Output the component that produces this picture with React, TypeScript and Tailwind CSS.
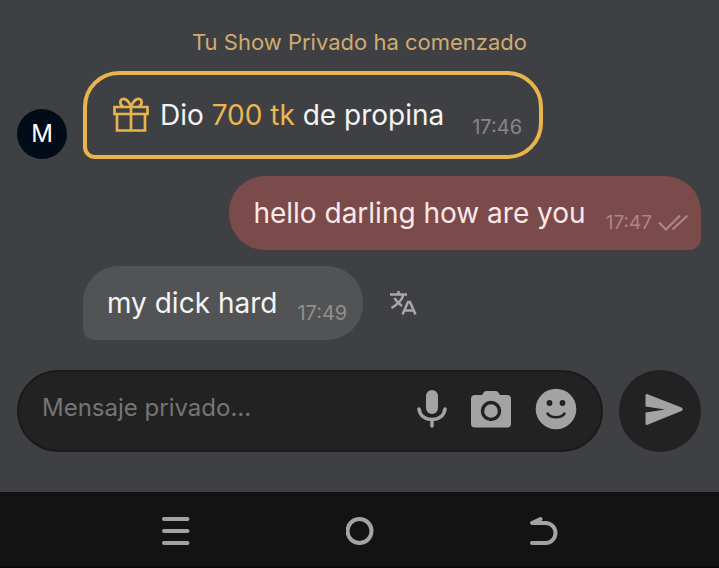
import type { ReactNode } from 'react'

type BubbleProps = {
  className: string
  time: string
  timeClassName: string
  children: ReactNode
  status?: ReactNode
}

function Bubble({ className, time, timeClassName, children, status }: BubbleProps) {
  return (
    <div className={`flex items-center ${className}`}>
      <p className="flex items-center gap-[11px] text-[28px] leading-9">{children}</p>
      <div className={`flex items-center gap-1.5 leading-6 ${timeClassName}`}>
        <time>{time}</time>
        {status}
      </div>
    </div>
  )
}

function GiftIcon() {
  return (
    <svg width="36" height="36" viewBox="0 0 36 36" fill="none" stroke="#e9b44c" strokeWidth="2.7" aria-hidden="true">
      <path d="M1.500 10h33v7h-33zM4 17v16.500h28V17M18 10v23.500" />
      <path d="M18 9.500C16 5 13 1.600 10 2c-3.500.4-3.500 5.500 0 7.500M18 9.500C20 5 23 1.600 26 2c3.500.4 3.500 5.500 0 7.500" />
    </svg>
  )
}

function ReadIcon() {
  return (
    <svg width="31" height="18" viewBox="0 0 31 18" fill="none" stroke="#ab8688" strokeWidth="2.200" aria-hidden="true">
      <path d="M1 8.500l7 7L22 1.500M14.500 15.500L29.500 1.500" />
    </svg>
  )
}

function TranslateIcon() {
  return (
    <svg width="28" height="26" viewBox="0 0 28 26" fill="none" stroke="#a8a8a9" strokeWidth="2.500" aria-hidden="true">
      <path d="M1 4.500h17M9.500 1v3.500M14.500 4.500C13 10 8.500 14.500 2.500 18M5.500 8c1.500 3 4 5.500 7.500 8" />
      <path d="M13.500 24.500L19 12h2l5.500 12.500M15.500 20.500h9" />
    </svg>
  )
}

function MicIcon() {
  return (
    <svg width="30" height="40" viewBox="0 0 30 40" aria-hidden="true">
      <rect x="9" y="1" width="12" height="24" rx="6" fill="#a3a3a3" />
      <path d="M2 20c1 7 6.500 10.500 13 10.500S27 27 28 20M15 30.500v6.500" fill="none" stroke="#a3a3a3" strokeWidth="3.600" strokeLinecap="round" />
    </svg>
  )
}

function CameraIcon() {
  return (
    <svg width="40" height="38" viewBox="0 0 40 38" aria-hidden="true">
      <path d="M4 5h7l2-3q1-1 2.500-1h9q1.500 0 2.500 1l2 3h7q4 0 4 4v25q0 3.500-4 3.500H4q-4 0-4-3.500V9q0-4 4-4z" fill="#a3a3a3" />
      <circle cx="20" cy="21" r="8.500" fill="none" stroke="#222" strokeWidth="3.400" />
    </svg>
  )
}

function SmileIcon() {
  return (
    <svg width="42" height="42" viewBox="0 0 42 42" aria-hidden="true">
      <circle cx="21" cy="21" r="20.300" fill="#a3a3a3" />
      <circle cx="14.500" cy="15" r="2.900" fill="#222" />
      <circle cx="27.500" cy="15" r="2.900" fill="#222" />
      <path d="M12.500 25.500c3.500 5 13.500 5 17 0" fill="none" stroke="#222" strokeWidth="2.600" strokeLinecap="round" />
    </svg>
  )
}

function SendIcon() {
  return (
    <svg width="40" height="34" viewBox="0 0 40 34" fill="#a3a3a3" aria-hidden="true">
      <path d="M1.500 2.500Q1.500.5 3.500 1.300L37.500 14.500q2.500 1.800 0 3.600L3.500 31.700q-2 .8-2-1.200V19.500L21 16.400 1.500 13.500z" />
    </svg>
  )
}

function Composer() {
  return (
    <form className="flex items-center gap-4 pl-[17px] pr-[18px]" onSubmit={(e) => e.preventDefault()}>
      <div className="flex h-[82px] min-w-0 flex-1 items-center gap-6 rounded-full border-2 border-[#1a1a1b] bg-[#222] pb-1 pl-[23px] pr-6">
        <input
          type="text"
          aria-label="Mensaje privado"
          placeholder="Mensaje privado..."
          className="mb-0.5 min-w-0 flex-1 bg-transparent text-2xl text-[#f1f1f1] outline-none placeholder:text-[#757575]"
        />
        <button type="button" aria-label="Grabar audio">
          <MicIcon />
        </button>
        <button type="button" aria-label="Enviar foto">
          <CameraIcon />
        </button>
        <button type="button" aria-label="Emojis">
          <SmileIcon />
        </button>
      </div>
      <button
        type="submit"
        aria-label="Enviar"
        className="flex size-[82px] shrink-0 items-center justify-center rounded-full bg-[#222] pb-0.5 pl-2"
      >
        <SendIcon />
      </button>
    </form>
  )
}

function SystemNav() {
  return (
    <nav className="flex h-[76px] items-center justify-center gap-[156px] border-b-2 border-[#0b0b0b] bg-[#131313] pt-1">
      <button type="button" aria-label="Recientes">
        <svg width="28" height="30" viewBox="0 0 28 30" fill="none" stroke="#a3a3a3" strokeWidth="4" strokeLinecap="round" aria-hidden="true">
          <path d="M2 3h23.500M2 15h23.500M2 27h23.500" />
        </svg>
      </button>
      <button type="button" aria-label="Inicio">
        <svg width="28" height="30" viewBox="0 0 28 30" fill="none" stroke="#a3a3a3" strokeWidth="4" aria-hidden="true">
          <circle cx="13.500" cy="15" r="12" />
        </svg>
      </button>
      <button type="button" aria-label="Atrás">
        <svg width="28" height="30" viewBox="0 0 28 30" fill="none" stroke="#a3a3a3" strokeWidth="4" strokeLinecap="round" strokeLinejoin="round" aria-hidden="true">
          <path d="M10.500 3L2 7H15.500a10 10 0 0 1 0 20H2" />
        </svg>
      </button>
    </nav>
  )
}

export default function App() {
  return (
    <main className="flex min-h-screen flex-col bg-[#3f4043] font-['Inter','Liberation_Sans',sans-serif]">
      <section className="flex flex-1 flex-col gap-4 pt-[27px] pb-[30px]">
        <p className="-mb-0.5 text-center text-[22px] leading-[30px] text-[#cfab6f]">Tu Show Privado ha comenzado</p>

        <div className="mb-px flex items-end gap-4 pl-[17px]">
          <div className="flex size-[50px] items-center justify-center rounded-full bg-[#020c19] text-2xl text-white">M</div>
          <Bubble
            className="h-[88px] gap-7 rounded-[36px] rounded-bl-xl border-4 border-[#e9b44c] pl-[26px] pr-[17px] text-[#f4f4f5]"
            time="17:46"
            timeClassName="mt-6 text-xl text-[#87878a]"
          >
            <GiftIcon />
            <span>
              Dio <span className="text-[#eab750]">700 tk</span> de propina
            </span>
          </Bubble>
        </div>

        <div className="flex justify-end pr-[18px]">
          <Bubble
            className="h-[74px] gap-5 rounded-[36px] rounded-br-xl bg-[#7b4a4b] pl-6 pr-3 text-[#fbe9e7]"
            time="17:47"
            timeClassName="mt-5 text-[19px] text-[#ab8688]"
            status={<ReadIcon />}
          >
            hello darling how are you
          </Bubble>
        </div>

        <div className="flex items-center gap-[26px] pl-[83px]">
          <Bubble
            className="h-[74px] gap-5 rounded-[36px] rounded-bl-xl bg-[#525354] pl-6 pr-4 text-[#f4f4f5]"
            time="17:49"
            timeClassName="mt-5 text-xl text-[#8f8f91]"
          >
            my dick hard
          </Bubble>
          <button type="button" aria-label="Traducir">
            <TranslateIcon />
          </button>
        </div>
      </section>

      <div className="pb-10">
        <Composer />
      </div>
      <SystemNav />
    </main>
  )
}
